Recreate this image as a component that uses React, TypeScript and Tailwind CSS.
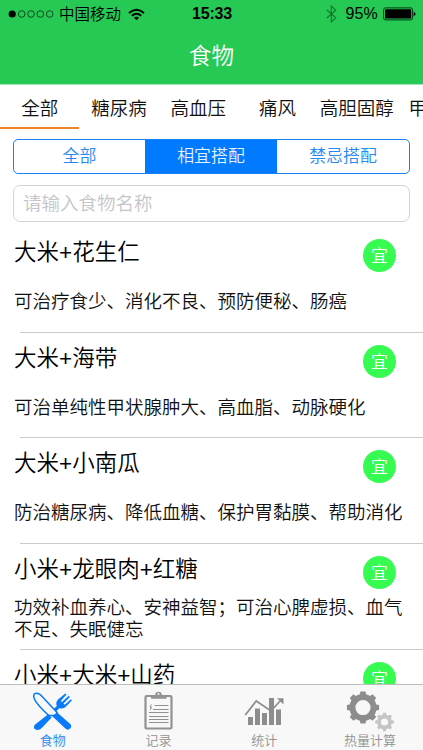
import React from 'react';

const categories = ['全部', '糖尿病', '高血压', '痛风', '高胆固醇', '甲状腺'];

const foods = [
  { name: '大米+花生仁', note: '可治疗食少、消化不良、预防便秘、肠癌' },
  { name: '大米+海带', note: '可治单纯性甲状腺肿大、高血脂、动脉硬化' },
  { name: '大米+小南瓜', note: '防治糖尿病、降低血糖、保护胃黏膜、帮助消化' },
  { name: '小米+龙眼肉+红糖', note: '功效补血养心、安神益智；可治心脾虚损、血气不足、失眠健忘' },
  { name: '小米+大米+山药', note: '' },
];

function gearPath(cx: number, cy: number, outer: number, root: number, hole: number) {
  const pts: string[] = [];
  for (let i = 0; i < 8; i++) {
    const a = (i * Math.PI) / 4 - Math.PI / 2;
    const corners: [number, number][] = [[-0.23, root], [-0.16, outer], [0.16, outer], [0.23, root]];
    corners.forEach(([d, r]) => {
      pts.push(`${(cx + r * Math.cos(a + d)).toFixed(2)} ${(cy + r * Math.sin(a + d)).toFixed(2)}`);
      if (d === 0.23) {
        const m = a + Math.PI / 8;
        pts.push(`${(cx + r * Math.cos(m)).toFixed(2)} ${(cy + r * Math.sin(m)).toFixed(2)}`);
      }
    });
  }
  return `M${pts.join('L')}ZM${cx - hole} ${cy}a${hole} ${hole} 0 1 0 ${hole * 2} 0a${hole} ${hole} 0 1 0 ${-hole * 2} 0Z`;
}

function StatusBar() {
  return (
    <div className="flex h-7 items-center justify-between pl-[8px] pr-[7px] text-black">
      <div className="flex w-[150px] items-center">
        <svg width="46" height="10" viewBox="0 0 46 10" fill="none" stroke="#0b3d19" strokeWidth="0.9">
          <circle cx="4.2" cy="5" r="3.6" fill="#000" stroke="none" />
          <circle cx="13.7" cy="5" r="3.3" />
          <circle cx="23" cy="5" r="3.3" />
          <circle cx="32.3" cy="5" r="3.3" />
          <circle cx="41.7" cy="5" r="3.3" />
        </svg>
        <span className="ml-[5px] pt-[2px] text-[15.5px] leading-[26px]">中国移动</span>
        <svg className="ml-[7px]" width="17" height="13" viewBox="0 0 17 13" fill="none" stroke="#000" strokeWidth="2">
          <path d="M1 5Q8.500-1.500 16 5" />
          <path d="M3.800 7.800Q8.500 3.700 13.200 7.800" />
          <path d="M8.500 12.300L5.900 9.700Q8.500 7.600 11.100 9.700Z" fill="#000" stroke="none" />
        </svg>
      </div>
      <span className="text-[16px] font-bold leading-7 tracking-[-0.2px]">15:33</span>
      <div className="flex w-[150px] items-center justify-end">
        <svg width="11" height="18" viewBox="0 0 11 18" fill="none" stroke="#15732f" strokeWidth="1.1">
          <path d="M.8 5L9.800 12.800L5.300 17V1L9.800 5.200L.8 13" />
        </svg>
        <span className="ml-[8px] text-[16px] leading-7 tracking-[0.2px]">95%</span>
        <svg className="ml-[5px]" width="33" height="14" viewBox="0 0 33 14">
          <rect x=".6" y=".9" width="29" height="12" rx="1.800" fill="none" stroke="#063914" strokeWidth="1" />
          <rect x="2" y="2.300" width="26.200" height="9.200" rx=".6" />
          <path d="M30.700 5Q32.600 5.300 32.600 7T30.700 9Z" />
        </svg>
      </div>
    </div>
  );
}

function CutleryIcon() {
  return (
    <svg width="40" height="40" viewBox="0 0 40 40">
      <path d="M37.700 36.800Q39 34.800 37 32.800L23 20.500L26.200 17.200Q30.500 18.400 33 15.500L39 9.300L37.900 8.300L31.800 13.800L30.500 12.600L36.900 5.900L35.700 4.800L29 11L27.800 9.900L33.500 3.500L32.300 2.400L25 8.600Q22.300 11.500 23.800 15L20.400 18.200L17 23L31.500 36.700Q35.500 40.500 37.700 36.800Z" fill="#087bfa" />
      <path d="M2.200 2.400Q6 1.600 9.600 6L24 21.500Q23.200 24.400 20.600 24.400L15.500 24.300L11 20Q.2 9 .7 4.700Q.9 2.700 2.200 2.400Z" fill="#f7f8f7" stroke="#087bfa" strokeWidth="1.500" />
      <path d="M15.200 23.200L18.700 26.500L8.500 37.200Q5.500 40 2 38.200Q-.2 36 2.100 33.500Z" fill="#087bfa" />
    </svg>
  );
}

function RecordIcon() {
  return (
    <svg width="30" height="40" viewBox="0 0 30 40" fill="none" stroke="#929292">
      <rect x="1.500" y="5" width="26" height="32.500" rx="1.200" strokeWidth="2.200" />
      <path d="M7 7.800V5.500Q7 4.200 8.500 4.200H11.300V2.800Q11.600.8 14.500.8T17.700 2.800V4.200H20.500Q22.500 4.200 22.500 5.500V7.800Z" fill="#929292" stroke="none" />
      <circle cx="14.500" cy="3" r="1" fill="#f7f8f7" stroke="none" />
      <path d="M10.500 14.500H24.500M9 18.500H24.500M5 21.500H24.500M5 25.500H24.500M5 28.500H24.500M5 31.500H24.500" strokeWidth="1" />
      <path d="M7.500 13.500L6 16.300H7.600L6.300 18.800" strokeWidth="1" />
    </svg>
  );
}

function StatsIcon() {
  return (
    <svg width="40" height="40" viewBox="0 0 40 40" fill="#8d8d8d">
      <path d="M4 26H9V34H4ZM11 17.500H16V34H11ZM18 22H23V34H18ZM25 7H30V34H25ZM32 18.500H37V34H32Z" />
      <path d="M1.300 24L12.200 10L27 20L37 9" fill="none" stroke="#8d8d8d" strokeWidth="1.700" />
      <path d="M33 7.200H39.500V13.200L37.300 11.400L35.500 9.500Z" />
    </svg>
  );
}

function GearsIcon() {
  return (
    <svg width="48" height="42" viewBox="0 0 48 42" fillRule="evenodd">
      <path d={gearPath(17, 16.5, 16.3, 13.6, 7.6)} fill="#8d8d8d" />
      <path d={gearPath(38.5, 31, 9.4, 7.4, 3.6)} fill="#c4c5c4" />
    </svg>
  );
}

const navItems = [
  { label: '食物', icon: <CutleryIcon />, color: 'text-[#2587ef]' },
  { label: '记录', icon: <RecordIcon />, color: 'text-[#929292]' },
  { label: '统计', icon: <StatsIcon />, color: 'text-[#929292]' },
  { label: '热量计算', icon: <GearsIcon />, color: 'text-[#929292]' },
];

export default function App() {
  return (
    <div className="flex h-[750px] w-[423px] flex-col overflow-hidden bg-white font-['Liberation_Sans','Noto_Sans_CJK_SC',sans-serif] font-[350] text-[#111]">
      <header className="h-[85px] shrink-0 border-b border-[#a5e6b8] bg-[#26c953]">
        <StatusBar />
        <h1 className="text-center text-[22.5px] font-[350] leading-[57px] text-white">食物</h1>
      </header>

      <nav className="flex h-[44px] shrink-0 overflow-hidden text-[18.5px] leading-[47px]">
        {categories.map((c, i) => (
          <div key={c} className={`flex w-[79.3px] shrink-0 justify-center whitespace-nowrap border-b-2 ${i === 0 ? 'border-[#f08426]' : 'border-transparent'}`}>
            {c}
          </div>
        ))}
      </nav>

      <div className="mx-[13px] mt-[10px] grid h-[35px] w-[397px] shrink-0 grid-cols-[131px_132px_132px] overflow-hidden rounded-[5px] border border-[#1a80f5] text-center text-[16.900px] leading-[34px] text-[#2488f5]">
        <span>全部</span>
        <span className="bg-[#007aff] text-[#e5f2ff]">相宜搭配</span>
        <span>禁忌搭配</span>
      </div>

      <div className="mx-[13px] mt-[11px] h-[37px] w-[397px] shrink-0 rounded-[7px] border border-[#d5d5d5] pl-[9px] text-[18.5px] leading-[36px] text-[#c5c5cb]">
        请输入食物名称
      </div>

      <main className="min-h-0 flex-1 overflow-hidden pt-[5px]">
        {foods.map((f) => (
          <section key={f.name} className="flex h-[105.7px] flex-col">
            <div className="flex h-[50px] shrink-0 justify-between pl-[14px] pr-[27px]">
              <h2 className="text-[22.5px] font-[350] leading-[51px] text-black">{f.name}</h2>
              <span className="mt-[12px] h-[33px] w-[33px] rounded-full bg-[#36fb50] text-center text-[17px] font-[350] leading-[35px] text-white">宜</span>
            </div>
            <p className="flex flex-1 items-center pl-[14px] pr-[14px] pb-[5px] text-[18.5px] leading-[22px]">{f.note}</p>
            <div className="ml-[20px] h-px shrink-0 bg-[#cbcbcb]" />
          </section>
        ))}
      </main>

      <footer className="grid h-[66px] shrink-0 grid-cols-4 border-t border-[#bcbebc] bg-[#f7f8f7]">
        {navItems.map((n) => (
          <div key={n.label} className={`flex flex-col items-center ${n.color}`}>
            <div className="flex h-[46px] items-start pt-[6px]">{n.icon}</div>
            <span className="text-[13px] leading-[19px]">{n.label}</span>
          </div>
        ))}
      </footer>
    </div>
  );
}
